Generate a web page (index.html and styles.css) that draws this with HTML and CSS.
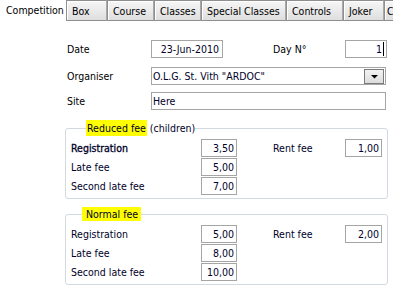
FILE: index.html
```html
<!DOCTYPE html>
<html>
<head>
<meta charset="utf-8">
<link rel="stylesheet" href="styles.css">
</head>
<body>
<div class="tabs">
  <div class="tab active">Competition</div>
  <div class="tab t-box">Box</div>
  <div class="tab t-course">Course</div>
  <div class="tab t-classes">Classes</div>
  <div class="tab t-special">Special Classes</div>
  <div class="tab t-controls">Controls</div>
  <div class="tab t-joker">Joker</div>
  <div class="tab t-more">C</div>
</div>
<div class="panel">
  <div class="row row-date">
    <span class="lbl lbl-main">Date</span>
    <span class="box box-date">23-Jun-2010</span>
    <span class="lbl lbl-day">Day N°</span>
    <span class="box box-day">1<span class="caret"></span></span>
  </div>
  <div class="row row-org">
    <span class="lbl lbl-main">Organiser</span>
    <span class="box box-wide combo">O.L.G. St. Vith "ARDOC"<span class="drop"><svg width="9" height="5" viewBox="0 0 9 5"><path d="M1 1h7L4.5 4.5z" fill="#000"/></svg></span></span>
  </div>
  <div class="row row-site">
    <span class="lbl lbl-main">Site</span>
    <span class="box box-wide">Here</span>
  </div>

  <fieldset class="group group-reduced">
    <legend class="legend-reduced"><mark class="hl hl-reduced">Reduced fee</mark> (children)</legend>
    <div class="frow">
      <span class="flbl strong">Registration</span>
      <span class="box fee">3,50</span>
      <span class="lbl lbl-rent">Rent fee</span>
      <span class="box rent">1,00</span>
    </div>
    <div class="frow">
      <span class="flbl">Late fee</span>
      <span class="box fee">5,00</span>
    </div>
    <div class="frow">
      <span class="flbl">Second late fee</span>
      <span class="box fee">7,00</span>
    </div>
  </fieldset>

  <fieldset class="group group-normal">
    <legend class="legend-normal"><mark class="hl hl-normal">Normal fee</mark></legend>
    <div class="frow">
      <span class="flbl">Registration</span>
      <span class="box fee">5,00</span>
      <span class="lbl lbl-rent">Rent fee</span>
      <span class="box rent">2,00</span>
    </div>
    <div class="frow">
      <span class="flbl">Late fee</span>
      <span class="box fee">8,00</span>
    </div>
    <div class="frow">
      <span class="flbl">Second late fee</span>
      <span class="box fee">10,00</span>
    </div>
  </fieldset>
</div>
</body>
</html>
```
FILE: styles.css
```css
* { box-sizing: border-box; }
html, body {
  margin: 0;
  padding: 0;
  background: #ffffff;
}
body {
  width: 393px;
  height: 294px;
  overflow: hidden;
  font-family: "DejaVu Sans", "Liberation Sans", sans-serif;
  font-stretch: condensed;
  font-size: 10.5px;
  color: #000;
}
.tabs {
  display: flex;
  height: 21px;
  white-space: nowrap;
  overflow: hidden;
}
.tab {
  flex: none;
  height: 21px;
  line-height: 20px;
  padding-left: 5px;
  border: 1px solid #8f8f8f;
  border-right-color: #a8a8a8;
  background: linear-gradient(#f6f6f6, #dedede);
  box-shadow: inset 1px 1px 0 #ffffff;
  overflow: hidden;
}
.tab.active {
  width: 66px;
  border: none;
  background: #ffffff;
  box-shadow: none;
  padding-left: 6px;
  line-height: 21px;
}
.t-box { width: 41px; }
.t-course { width: 47px; }
.t-classes { width: 47px; }
.t-special { width: 85px; }
.t-controls { width: 57px; }
.t-joker { width: 41px; }
.t-more { width: 9px; padding-left: 2px; border-right: none; }

.panel {
  padding-left: 65px;
}
.row {
  display: flex;
  align-items: center;
  height: 18px;
  padding-left: 2px;
}
.row-date { margin-top: 19px; }
.row-org { margin-top: 9px; }
.row-site { margin-top: 7px; }
.lbl {
  flex: none;
  line-height: 18px;
}
.lbl-main { width: 84px; }
.lbl-day { width: 72px; margin-left: 50px; }
.box {
  flex: none;
  display: flex;
  align-items: center;
  height: 18px;
  border: 1px solid #a5a5a5;
  background: #fff;
  color: #00002a;
  padding: 0 3px;
}
.box-date { width: 72px; justify-content: flex-end; }
.box-day { width: 42px; justify-content: flex-end; padding-right: 2px; }
.caret {
  display: inline-block;
  width: 1px;
  height: 14px;
  background: #000;
  margin-left: 1px;
}
.box-wide { width: 235px; padding-left: 1px; }
.combo {
  position: relative;
}
.drop {
  position: absolute;
  right: 1px;
  top: 1px;
  width: 20px;
  height: 15px;
  border: 1px solid #7a7a7a;
  background: linear-gradient(#f2f2f2, #dcdcdc);
  display: flex;
  align-items: center;
  justify-content: center;
}

.group {
  width: 323px;
  margin: 0;
  padding: 2px 0 3px 5px;
  border: 1px solid #d3d9e0;
  border-radius: 3px;
}
.group-reduced { margin-top: 9px; }
.group-normal { margin-top: 7px; padding-top: 3px; }
legend {
  padding: 0;
  line-height: 18px;
  color: #00002a;
}
.legend-reduced { margin-left: 15px; }
.legend-normal { margin-left: 11px; line-height: 16px; }
.hl {
  background: #ffff00;
  color: #00002a;
}
.hl-reduced { padding: 2px 1px 2px 1px; }
.hl-normal { padding: 1px 3px 1px 4px; }

.frow {
  display: flex;
  align-items: center;
  height: 18px;
  margin-bottom: 1px;
}
.frow:last-child { margin-bottom: 0; }
.flbl {
  flex: none;
  width: 130px;
  color: #00002a;
  line-height: 18px;
}
.strong { -webkit-text-stroke: 0.3px #00002a; }
.fee { width: 36px; justify-content: flex-end; padding-right: 2px; }
.lbl-rent { width: 72px; margin-left: 36px; color: #00002a; }
.rent { width: 37px; justify-content: flex-end; padding-right: 2px; }
```
